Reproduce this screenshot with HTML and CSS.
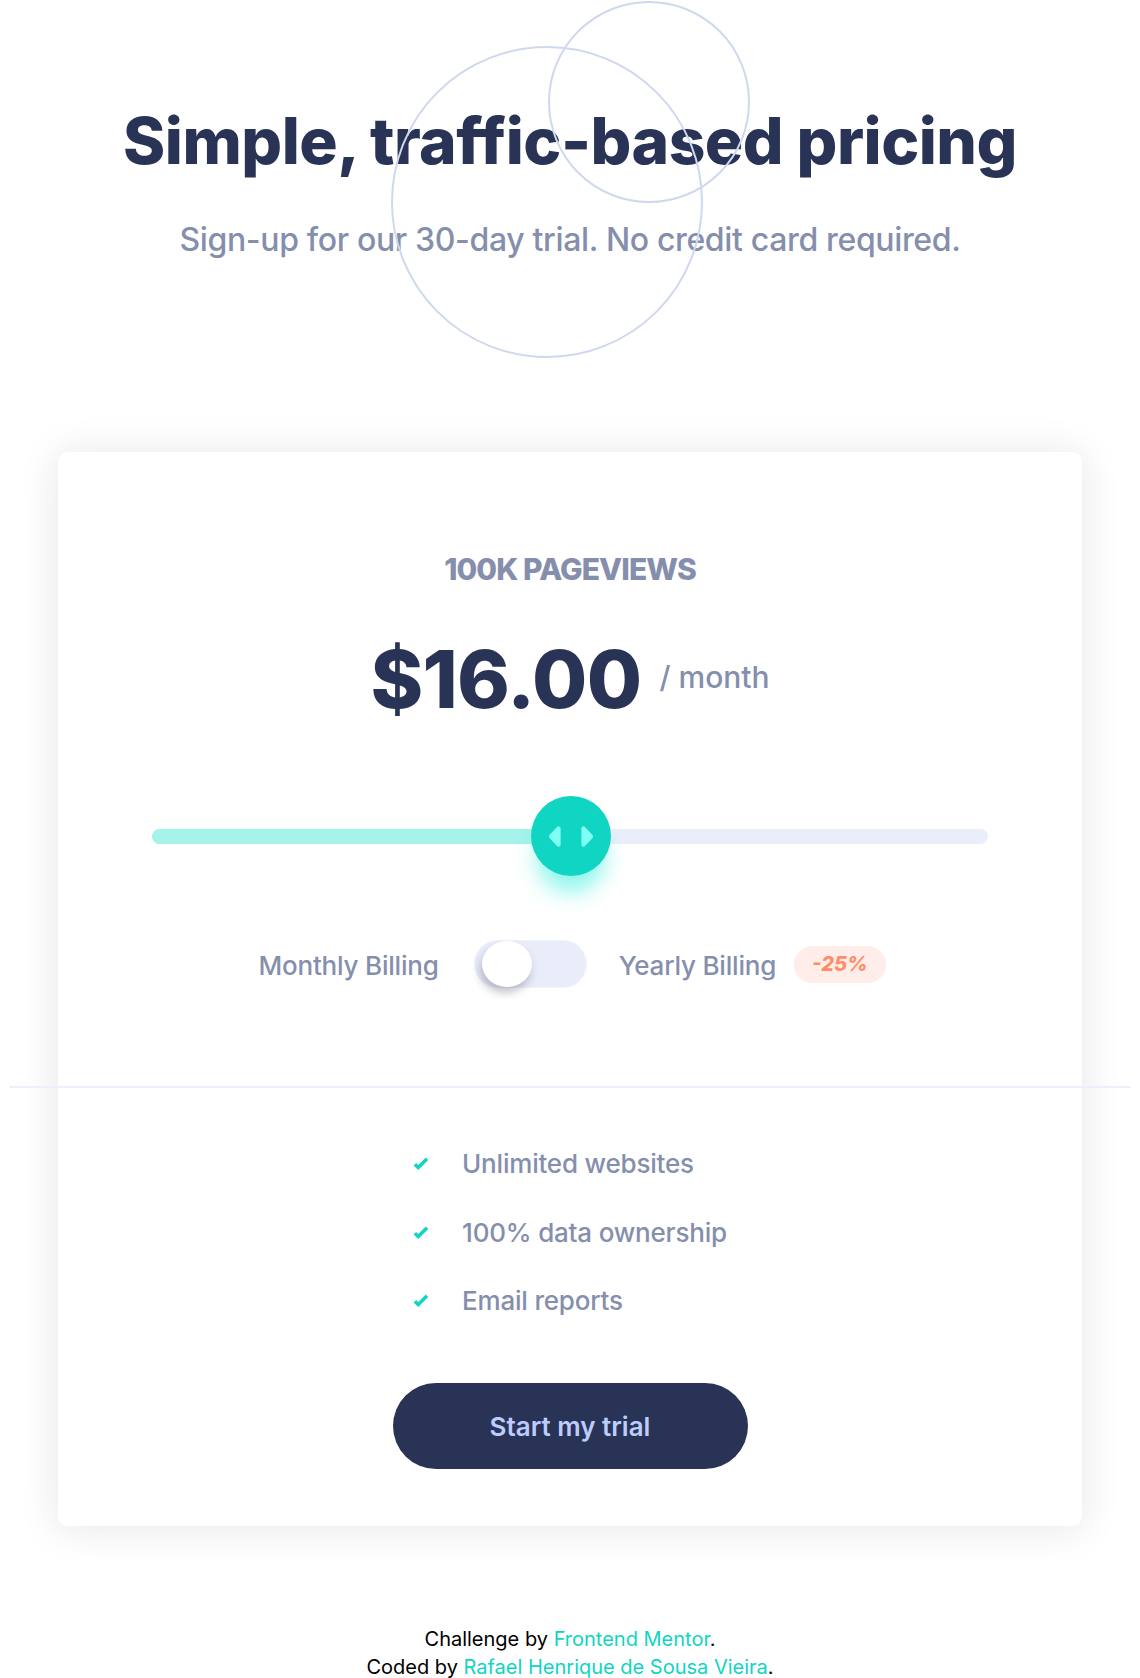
FILE: index.html
```
<!DOCTYPE html>
<html lang="en">
<head>
<meta charset="utf-8">
<title>Interactive pricing component</title>
<link rel="stylesheet" href="styles.css">
</head>
<body>
<div class="page">
  <svg class="circles" width="1140" height="400" viewBox="0 0 1140 400" aria-hidden="true">
    <circle cx="547" cy="202" r="155" fill="none" stroke="#cfd8ef" stroke-width="2"/>
    <circle cx="649" cy="102" r="100" fill="none" stroke="#cfd8ef" stroke-width="2"/>
  </svg>
  <header class="hero">
    <h1 class="title">Simple, traffic-based pricing</h1>
    <p class="subtitle">Sign-up for our 30-day trial. No credit card required.</p>
  </header>

  <main class="card">
    <section class="card-top">
      <p class="views">100K Pageviews</p>
      <div class="price">
        <span class="amount">$16.00</span>
        <span class="per">/ month</span>
      </div>
      <div class="slider">
        <div class="track"><div class="fill" style="width:50%"></div></div>
        <div class="thumb">
          <svg width="46" height="27" viewBox="0 0 22 13"><path d="M16 2.558v7.884a1 1 0 001.735.679l3.639-3.943a1 1 0 000-1.356l-3.64-3.943A1 1 0 0016 2.558zM6 2.558v7.884a1 1 0 01-1.735.679L.626 7.178a1 1 0 010-1.356l3.64-3.943A1 1 0 016 2.558z" fill="#80fff3" fill-rule="evenodd"/></svg>
        </div>
      </div>
      <div class="billing">
        <span class="billing-label">Monthly Billing</span>
        <span class="toggle"><span class="knob"></span></span>
        <span class="billing-label">Yearly Billing</span>
        <span class="badge">-25%</span>
      </div>
    </section>
    <div class="divider"></div>
    <section class="card-bottom">
      <ul class="features">
        <li class="feature"><svg class="check" width="16" height="14" viewBox="0 0 9 8"><path fill="none" stroke="#10d5c2" stroke-width="2" d="M1 4.134l1.907 1.908L7.949 1"/></svg><span>Unlimited websites</span></li>
        <li class="feature"><svg class="check" width="16" height="14" viewBox="0 0 9 8"><path fill="none" stroke="#10d5c2" stroke-width="2" d="M1 4.134l1.907 1.908L7.949 1"/></svg><span>100% data ownership</span></li>
        <li class="feature"><svg class="check" width="16" height="14" viewBox="0 0 9 8"><path fill="none" stroke="#10d5c2" stroke-width="2" d="M1 4.134l1.907 1.908L7.949 1"/></svg><span>Email reports</span></li>
      </ul>
      <button class="cta" type="button">Start my trial</button>
    </section>
  </main>

  <footer class="attribution">
    <p>Challenge by <a href="#">Frontend Mentor</a>.</p>
    <p>Coded by <a href="#">Rafael Henrique de Sousa Vieira</a>.</p>
  </footer>
</div>
</body>
</html>
```

FILE: styles.css
```
* { box-sizing: border-box; }

html, body {
  margin: 0;
  padding: 0;
  background: #ffffff;
}

body {
  font-family: "Inter", "Liberation Sans", sans-serif;
  color: #858fad;
}

.page {
  position: relative;
  width: 1140px;
  margin: 0 auto;
  overflow: hidden;
}

.circles {
  position: absolute;
  left: 0;
  top: 0;
  z-index: 2;
  pointer-events: none;
}

.hero {
  padding-top: 109px;
  text-align: center;
}

.title {
  margin: 0;
  font-size: 64px;
  line-height: 64px;
  font-weight: 800;
  color: #293356;
  letter-spacing: -0.5px;
}

.subtitle {
  margin: 51px 0 0;
  font-size: 32px;
  line-height: 32px;
  font-weight: 500;
  color: #858fad;
  letter-spacing: -0.35px;
}

.card {
  width: 1024px;
  margin: 196px auto 0;
  background: #ffffff;
  border-radius: 10px;
  box-shadow: 0 2px 40px rgba(30, 30, 50, 0.11);
}

.card-top {
  padding: 102px 94px 99px;
  display: flex;
  flex-direction: column;
  align-items: center;
}

.views {
  margin: 0;
  font-size: 30px;
  line-height: 30px;
  font-weight: 800;
  text-transform: uppercase;
  letter-spacing: -0.9px;
  color: #858fad;
}

.price {
  margin-top: 55px;
  display: flex;
  align-items: center;
  gap: 18px;
}

.amount {
  font-size: 80px;
  line-height: 80px;
  font-weight: 800;
  color: #293356;
  letter-spacing: -0.7px;
}

.per {
  font-size: 30px;
  line-height: 30px;
  font-weight: 500;
  color: #858fad;
  margin-top: -4px;
}

.slider {
  position: relative;
  margin-top: 77px;
  width: 100%;
  height: 80px;
  display: flex;
  align-items: center;
}

.track {
  width: 100%;
  height: 15px;
  border-radius: 8px;
  background: #eaeefb;
  overflow: hidden;
}

.fill {
  height: 100%;
  background: #a5f3eb;
}

.thumb {
  position: absolute;
  left: 50%;
  top: 0;
  width: 80px;
  height: 80px;
  margin-left: -39px;
  border-radius: 50%;
  background: #10d5c2;
  box-shadow: 0 22px 22px -6px rgba(0, 235, 212, 0.45);
  display: flex;
  align-items: center;
  justify-content: center;
}

.billing {
  margin-top: 65px;
  display: flex;
  align-items: center;
  height: 46px;
  padding-left: 4px;
}

.billing-label {
  font-size: 26px;
  line-height: 30px;
  font-weight: 500;
  color: #858fad;
  letter-spacing: -0.2px;
  padding-top: 3px;
}

.toggle {
  margin: 0 33px 0 36px;
  width: 111px;
  height: 46px;
  border-radius: 23px;
  background: #e9edfa;
  box-shadow: 0 0 0 1px #f1f3fc;
  display: flex;
  align-items: center;
  padding-left: 7px;
}

.knob {
  width: 50px;
  height: 46px;
  border-radius: 50%;
  background: #ffffff;
  box-shadow: -2px 6px 8px rgba(60, 60, 90, 0.3);
}

.badge {
  margin-left: 18px;
  height: 37px;
  padding: 0 18px;
  border-radius: 19px;
  background: #feede8;
  color: #ff8d68;
  font-size: 20px;
  font-weight: 800;
  font-style: italic;
  display: flex;
  align-items: center;
}

.divider {
  height: 2px;
  margin: 0 -49px;
  background: #ecf0fb;
}

.card-bottom {
  padding: 62px 0 57px;
  display: flex;
  flex-direction: column;
  align-items: center;
}

.features {
  list-style: none;
  margin: 0;
  padding: 0;
  display: flex;
  flex-direction: column;
  gap: 40.5px;
}

.feature {
  display: flex;
  align-items: center;
  font-size: 26px;
  line-height: 28px;
  font-weight: 500;
  color: #858fad;
  letter-spacing: -0.2px;
}

.check {
  margin-right: 33px;
  flex: none;
}

.cta {
  margin-top: 68px;
  width: 355px;
  height: 86px;
  border: 0;
  border-radius: 43px;
  background: #293356;
  color: #bdccff;
  font-family: inherit;
  font-size: 26px;
  font-weight: 600;
  cursor: pointer;
}

.attribution {
  margin-top: 99px;
  text-align: center;
  font-size: 20px;
  line-height: 28px;
  color: #000000;
}

.attribution p {
  margin: 0;
}

.attribution a {
  color: #10d5c2;
  text-decoration: none;
}
```
